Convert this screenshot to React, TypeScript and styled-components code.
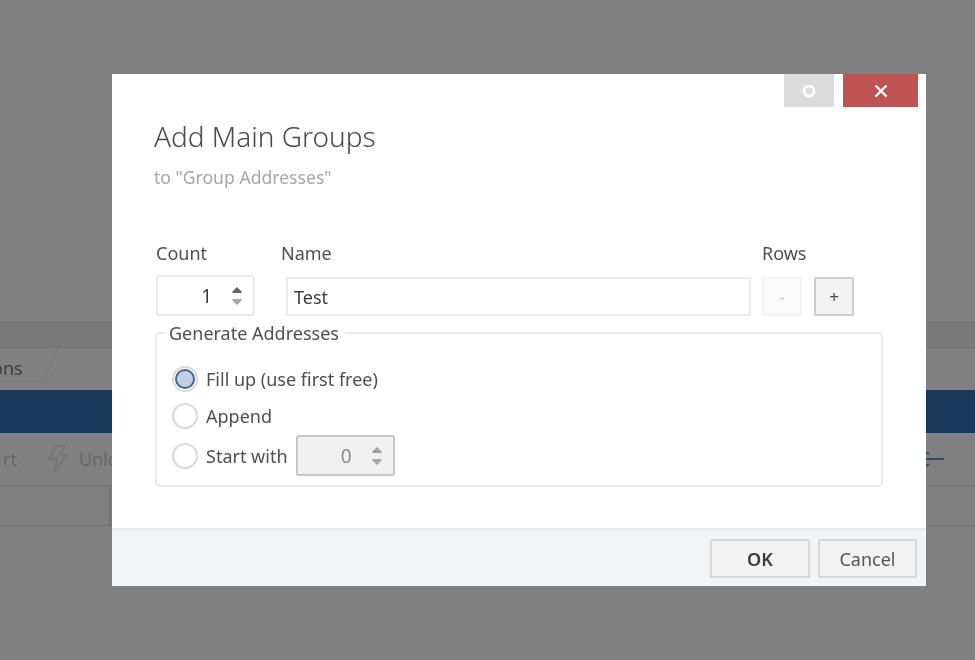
import styled, { createGlobalStyle } from 'styled-components';

const FONT = `"Noto Sans", "Open Sans", "Liberation Sans", sans-serif`;

const GlobalStyle = createGlobalStyle`
    html, body {
        margin: 0;
        padding: 0;
        background: #808080;
        font-family: ${FONT};
    }
    * {
        box-sizing: border-box;
    }
`;

function SpinnerArrows({ dim }: { dim?: boolean }): JSX.Element {
    return (
        <SpinnerIcon width="12" height="22" viewBox="0 0 12 22">
            <path d="M6 2 L10.5 6.5 L10.5 8 L1.5 8 L1.5 6.5 Z" fill={dim ? '#a0a0a0' : '#666'} />
            <path d="M1.5 14 L10.5 14 L10.5 15.5 L6 20 L1.5 15.5 Z" fill="#a8a8a8" />
        </SpinnerIcon>
    );
}

export default function App(): JSX.Element {
    return (
        <Page>
            <GlobalStyle />
            <Backdrop>
                <TopStrip />
                <TabRow>
                    <Tab><TabLabel>ons</TabLabel></Tab>
                </TabRow>
                <BlueBar />
                <Toolbar>
                    <ToolLabel $first>rt</ToolLabel>
                    <svg width="22" height="28" viewBox="0 0 22 28" fill="none" stroke="#727272" strokeWidth="1.3">
                        <path d="M9 1 L18 1 L13 10 L20 10 L7 27 L10 14 L2 14 Z" />
                    </svg>
                    <ToolLabel>Unlock</ToolLabel>
                    <ToolIcon width="22" height="18" viewBox="0 0 22 18" fill="none" stroke="#2b4a75" strokeWidth="2">
                        <path d="M2 9 H21 M3 2 L6 4 M3 16 L6 14" />
                    </ToolIcon>
                </Toolbar>
                <TableRow>
                    <TableLeft />
                </TableRow>
            </Backdrop>

            <Dialog>
                <WindowButtons>
                    <WindowButton>
                        <svg width="16" height="16" viewBox="0 0 16 16" fill="none" stroke="#fff" strokeWidth="2.6">
                            <circle cx="8" cy="8" r="5" />
                        </svg>
                    </WindowButton>
                    <WindowButton $close>
                        <svg width="16" height="16" viewBox="0 0 16 16" fill="none" stroke="#fff" strokeWidth="2.4">
                            <path d="M2.5 2.5 L13.5 13.5 M13.5 2.5 L2.5 13.5" />
                        </svg>
                    </WindowButton>
                </WindowButtons>

                <Header>
                    <Title>Add Main Groups</Title>
                    <Subtitle>to "Group Addresses"</Subtitle>
                </Header>

                <Body>
                    <FormRow>
                        <Field>
                            <Label>Count</Label>
                            <NumberBox>
                                <NumberValue>1</NumberValue>
                                <SpinnerArrows />
                            </NumberBox>
                        </Field>
                        <Field>
                            <Label $shift>Name</Label>
                            <TextBox>Test</TextBox>
                        </Field>
                        <Field>
                            <Label>Rows</Label>
                            <RowButtons>
                                <RowButton disabled>-</RowButton>
                                <RowButton>+</RowButton>
                            </RowButtons>
                        </Field>
                    </FormRow>

                    <GroupBox>
                        <Legend>Generate Addresses</Legend>
                        <RadioRow>
                            <Radio $checked />
                            <RadioLabel>Fill up (use first free)</RadioLabel>
                        </RadioRow>
                        <RadioRow>
                            <Radio />
                            <RadioLabel>Append</RadioLabel>
                        </RadioRow>
                        <RadioRow>
                            <Radio />
                            <RadioLabel>Start with</RadioLabel>
                            <NumberBox $disabled>
                                <NumberValue $disabled>0</NumberValue>
                                <SpinnerArrows dim />
                            </NumberBox>
                        </RadioRow>
                    </GroupBox>
                </Body>

                <Footer>
                    <FooterButton $primary>OK</FooterButton>
                    <FooterButton>Cancel</FooterButton>
                </Footer>
            </Dialog>
        </Page>
    );
}

const Page = styled.div`
    position: relative;
    width: 975px;
    height: 660px;
    overflow: hidden;
    background: #808080;
    filter: blur(0.35px);
`;

const Backdrop = styled.div`
    display: flex;
    flex-direction: column;
    padding-top: 322px;
`;

const TopStrip = styled.div`
    height: 26px;
    background: #7a7a7a;
    border-top: 1px solid #747474;
    border-bottom: 1px solid #727272;
`;

const TabRow = styled.div`
    height: 42px;
    overflow: hidden;
`;

const Tab = styled.div`
    position: relative;
    display: flex;
    align-items: center;
    width: 44px;
    height: 34px;
    border-bottom: 1px solid #757575;

    &::after {
        content: '';
        position: absolute;
        top: 0;
        right: -7px;
        width: 14px;
        height: 34px;
        border-right: 1px solid #757575;
        transform: skewX(-22deg);
        transform-origin: center;
    }
`;

const TabLabel = styled.span`
    margin: 6px 0 0 -8px;
    font-size: 18px;
    line-height: 40px;
    color: #3c3c3c;
`;

const BlueBar = styled.div`
    height: 43px;
    background: #1a375c;
`;

const Toolbar = styled.div`
    display: flex;
    align-items: center;
    height: 53px;
    border-bottom: 1px solid #727272;
    padding-right: 30px;
    overflow: hidden;

    svg:first-of-type {
        margin: 0 10px 0 30px;
    }
`;

const ToolLabel = styled.span<{ $first?: boolean }>`
    flex: none;
    font-size: 18px;
    color: #666;
    margin-left: ${(p) => (p.$first ? '3px' : '0')};
`;

const ToolIcon = styled.svg`
    margin-left: auto;
`;

const TableRow = styled.div`
    height: 40px;
    border-bottom: 1px solid #727272;
`;

const TableLeft = styled.div`
    width: 111px;
    height: 100%;
    border-right: 2px solid #727272;
`;

const Dialog = styled.div`
    position: absolute;
    left: 112px;
    top: 74px;
    display: flex;
    flex-direction: column;
    width: 814px;
    height: 512px;
    background: #fff;
`;

const WindowButtons = styled.div`
    position: absolute;
    top: 0;
    right: 8px;
    display: flex;
    gap: 9px;
`;

const WindowButton = styled.div<{ $close?: boolean }>`
    display: flex;
    align-items: center;
    justify-content: center;
    width: ${(p) => (p.$close ? '75px' : '50px')};
    height: 33px;
    background: ${(p) => (p.$close ? '#bf5252' : '#dcdcdc')};
`;

const Header = styled.div`
    padding: 42px 0 0 42px;
`;

const Title = styled.div`
    font-size: 28px;
    font-weight: 300;
    line-height: 40px;
    color: #4a4a4a;
`;

const Subtitle = styled.div`
    margin-top: 11px;
    font-size: 17.6px;
    line-height: 20px;
    color: #a6a6a6;
`;

const Body = styled.div`
    flex: 1;
    padding: 51px 43px 0 44px;
`;

const FormRow = styled.div`
    display: grid;
    grid-template-columns: 99px 465px auto;
    column-gap: 31px;
`;

const Field = styled.div`
    display: flex;
    flex-direction: column;

    &:last-child {
        margin-left: -20px;
    }
`;

const Label = styled.div<{ $shift?: boolean }>`
    height: 37px;
    margin-left: ${(p) => (p.$shift ? '-5px' : '0')};
    font-size: 18px;
    line-height: 30px;
    color: #4f4f4f;
`;

const NumberBox = styled.div<{ $disabled?: boolean }>`
    display: flex;
    align-items: center;
    justify-content: flex-end;
    gap: 19px;
    width: 99px;
    height: 41px;
    padding-right: 10px;
    border: ${(p) => (p.$disabled ? '2px solid #c6c6c6' : '2px solid #e6e9ed')};
    border-radius: 3px;
    background: ${(p) => (p.$disabled ? '#f1f1f1' : '#fff')};
`;

const NumberValue = styled.span<{ $disabled?: boolean }>`
    font-size: 19px;
    color: ${(p) => (p.$disabled ? '#8c8c8c' : '#3c3c3c')};
`;

const SpinnerIcon = styled.svg`
    flex: none;
`;

const TextBox = styled.div`
    height: 39px;
    margin-top: 2px;
    padding-left: 6px;
    border: 2px solid #ebebeb;
    font-size: 18px;
    line-height: 37px;
    color: #3c3c3c;
`;

const RowButtons = styled.div`
    display: flex;
    gap: 12px;
    margin-top: 2px;
`;

const RowButton = styled.div<{ disabled?: boolean }>`
    display: flex;
    align-items: center;
    justify-content: center;
    width: 40px;
    height: 39px;
    border: 2px solid ${(p) => (p.disabled ? '#f3f3f3' : '#cfcfcf')};
    background: ${(p) => (p.disabled ? '#fbfbfb' : '#f2f2f2')};
    font-size: 17px;
    color: ${(p) => (p.disabled ? '#c8c8c8' : '#4a4a4a')};
`;

const GroupBox = styled.fieldset`
    display: flex;
    flex-direction: column;
    gap: 1px;
    height: 164px;
    margin: 7px 0 0 -1px;
    padding: 18px 0 0 15px;
    border: 2px solid #e6ebf0;
    border-radius: 5px;
`;

const Legend = styled.legend`
    margin-left: -7px;
    padding: 0 6px 0 4px;
    font-size: 18px;
    line-height: 20px;
    color: #4f4f4f;
`;

const RadioRow = styled.div`
    display: flex;
    align-items: center;
    min-height: 36px;
`;

const Radio = styled.span<{ $checked?: boolean }>`
    flex: none;
    width: 26px;
    height: 26px;
    margin-right: 8px;
    border: 2px solid #d8d8d8;
    border-radius: 50%;
    background: #fff;
    display: flex;
    align-items: center;
    justify-content: center;

    &::after {
        content: '';
        display: ${(p) => (p.$checked ? 'block' : 'none')};
        width: 16px;
        height: 16px;
        border: 2px solid #3f6496;
        border-radius: 50%;
        background: #c2d0e0;
    }
`;

const RadioLabel = styled.span`
    margin-right: 8px;
    font-size: 18px;
    color: #4f4f4f;
`;

const Footer = styled.div`
    display: flex;
    justify-content: flex-end;
    gap: 8px;
    height: 58px;
    padding: 9px 9px 0 0;
    background: #f3f4f6;
    border-top: 2px solid #e9e9e9;
`;

const FooterButton = styled.div<{ $primary?: boolean }>`
    display: flex;
    align-items: center;
    justify-content: center;
    width: ${(p) => (p.$primary ? '100px' : '99px')};
    height: 39px;
    border: 2px solid #d8d8d8;
    background: #f2f2f2;
    font-size: 18px;
    font-weight: ${(p) => (p.$primary ? 600 : 400)};
    color: ${(p) => (p.$primary ? '#3c3c3c' : '#555')};
`;
